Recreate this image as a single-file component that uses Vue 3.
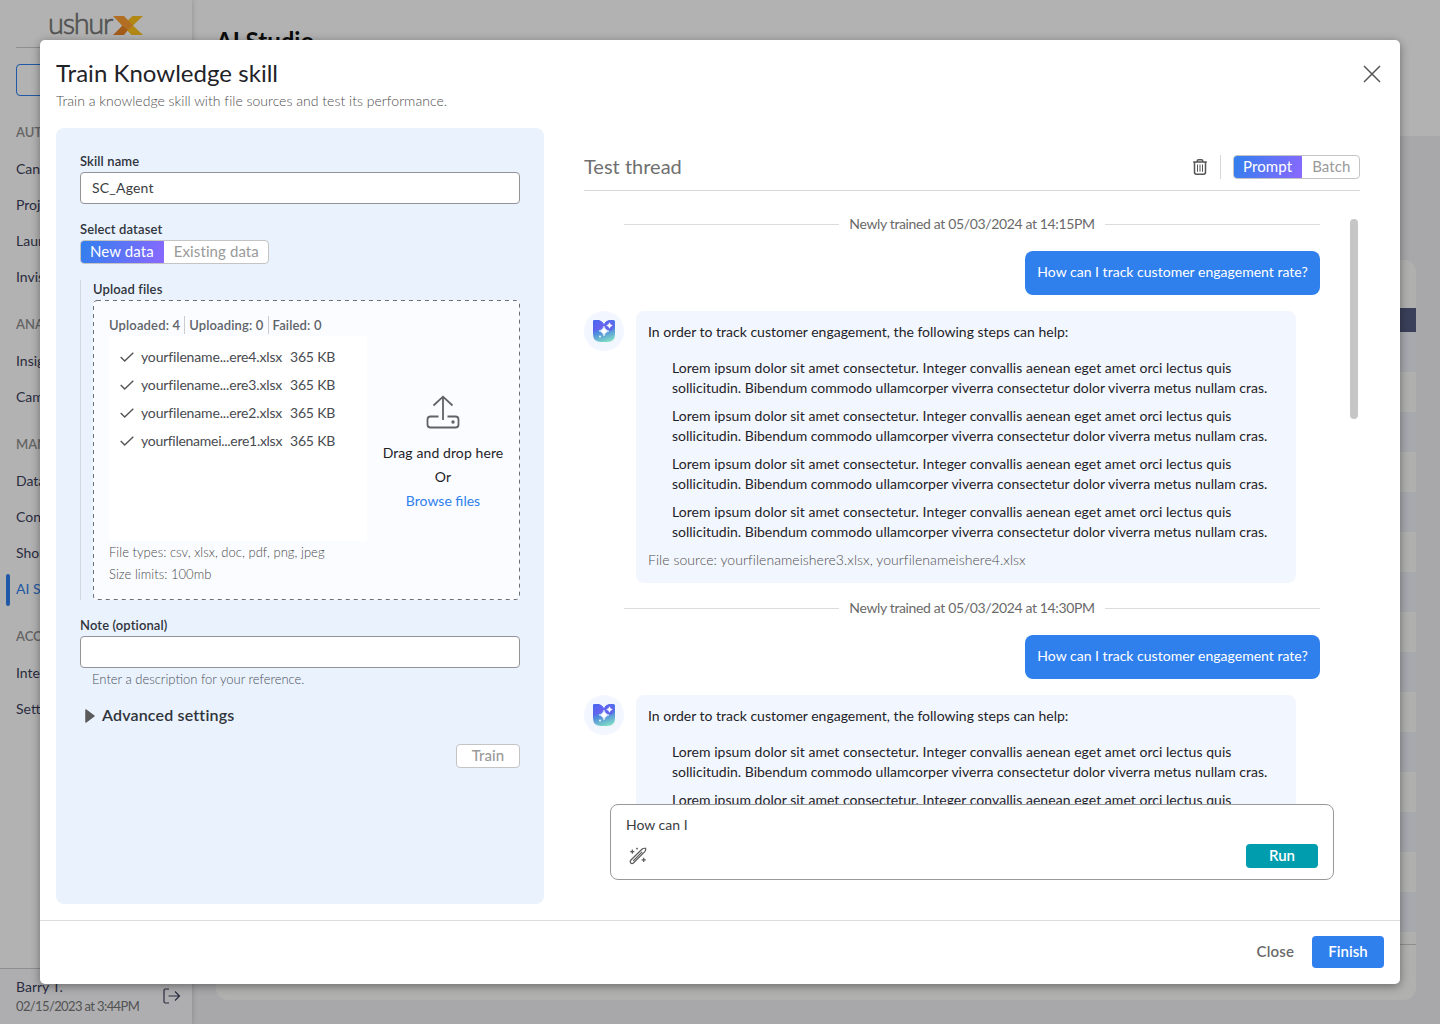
<script setup>
import { ref } from "vue";

const navGroups = [
  {
    title: "AUTOMATE",
    items: ["Canvas", "Projects", "Launchpad", "Invisible App"],
  },
  { title: "ANALYZE", items: ["Insights", "Campaigns"] },
  {
    title: "MANAGE",
    items: ["Data", "Contacts", "Shortlinks", "AI Studio"],
  },
  { title: "ACCOUNT", items: ["Integrations", "Settings"] },
];
const activeItem = "AI Studio";

const skillName = ref("SC_Agent");
const note = ref("");
const dataset = ref("New data");
const mode = ref("Prompt");

const files = [
  { name: "yourfilename...ere4.xlsx", size: "365 KB" },
  { name: "yourfilename...ere3.xlsx", size: "365 KB" },
  { name: "yourfilename...ere2.xlsx", size: "365 KB" },
  { name: "yourfilenamei...ere1.xlsx", size: "365 KB" },
];

const step = [
  "Lorem ipsum dolor sit amet consectetur. Integer convallis aenean eget amet orci lectus quis",
  "sollicitudin. Bibendum commodo ullamcorper viverra consectetur dolor viverra metus nullam cras.",
];
const threads = [
  {
    time: "Newly trained at 05/03/2024 at 14:15PM",
    steps: 4,
    source: "yourfilenameishere3.xlsx, yourfilenameishere4.xlsx",
  },
  { time: "Newly trained at 05/03/2024 at 14:30PM", steps: 2 },
];
</script>

<template>
  <div class="app">
    <aside class="sidebar">
      <div class="brand">
        <span class="brand-text">ushur</span>
        <svg class="brand-x" width="30" height="19" viewBox="0 0 30 19">
          <path class="x-right" d="M19.500 0H30L20 9.500L30 19H18.500L9.500 9.500Z" />
          <path class="x-left" d="M0 0H11L20 9.500L15 14L9 9.500Z" />
          <path class="x-foot" d="M0 19L9.500 9.500L15 14L11 19Z" />
        </svg>
      </div>
      <div class="new-btn"></div>
      <nav>
        <template v-for="g in navGroups" :key="g.title">
          <h4>{{ g.title }}</h4>
          <a
            v-for="item in g.items"
            :key="item"
            :class="{ active: item === activeItem }"
            >{{ item }}</a
          >
        </template>
      </nav>
      <div class="account">
        <div>
          <p class="account-name">Barry T.</p>
          <p class="account-time">02/15/2023 at 3:44PM</p>
        </div>
        <svg width="18" height="16" viewBox="0 0 18 16" class="logout">
          <path d="M6 1H2.500Q1 1 1 2.500V13.500Q1 15 2.500 15H6M5.500 8H16.500M12 3.500L16.500 8L12 12.500" />
        </svg>
      </div>
    </aside>
    <main class="page">
      <header class="page-head"><h1>AI Studio</h1></header>
      <div class="page-card">
        <div class="table-head"></div>
        <div v-for="n in 15" :key="n" class="table-row"></div>
        <div class="table-end"></div>
      </div>
    </main>

    <div class="overlay">
      <section class="modal">
        <header class="modal-head">
          <div>
            <h2>Train Knowledge skill</h2>
            <p>Train a knowledge skill with file sources and test its performance.</p>
          </div>
          <svg class="close-icon" width="18" height="18" viewBox="0 0 18 18">
            <path d="M1 1L17 17M17 1L1 17" />
          </svg>
        </header>

        <div class="modal-body">
          <form class="panel" @submit.prevent>
            <label>Skill name</label>
            <input v-model="skillName" class="field" type="text" />

            <label class="dataset-label">Select dataset</label>
            <div class="toggle">
              <button
                v-for="d in ['New data', 'Existing data']"
                :key="d"
                type="button"
                :class="{ on: dataset === d }"
                @click="dataset = d"
              >
                {{ d }}
              </button>
            </div>

            <div class="upload">
              <label>Upload files</label>
              <div class="dropzone">
                <svg class="dash" width="427" height="300">
                  <rect x="0.5" y="0.5" width="426" height="299" rx="3.500" />
                </svg>
                <div class="drop-left">
                  <div class="stats">
                    <span>Uploaded: 4</span>
                    <span>Uploading: 0</span>
                    <span>Failed: 0</span>
                  </div>
                  <ul class="files">
                    <li v-for="f in files" :key="f.name">
                      <svg width="14" height="10" viewBox="0 0 14 10">
                        <path d="M0.700 5L4.700 9L13.300 0.700" />
                      </svg>
                      <span class="file-name" :class="{ tight: f.name.length > 24 }">{{
                        f.name
                      }}</span>
                      <span class="file-size">{{ f.size }}</span>
                    </li>
                  </ul>
                  <p class="limits">File types: csv, xlsx, doc, pdf, png, jpeg</p>
                  <p class="limits">Size limits: 100mb</p>
                </div>
                <div class="drop-right">
                  <svg width="34" height="34" viewBox="0 0 34 34">
                    <path d="M12.500 21.500H4.500Q1.500 21.500 1.500 24.500V29.500Q1.500 32.500 4.500 32.500H29.500Q32.500 32.500 32.500 29.500V24.500Q32.500 21.500 29.500 21.500H21.500M17 25V2M7.500 10.500L17 1.700L26.500 10.500" />
                    <circle cx="27" cy="27" r="1.700" />
                  </svg>
                  <p>Drag and drop here</p>
                  <p>Or</p>
                  <p class="browse">Browse files</p>
                </div>
              </div>
            </div>

            <label class="note-label">Note (optional)</label>
            <input v-model="note" class="field" type="text" />
            <p class="hint">Enter a description for your reference.</p>

            <div class="advanced">
              <svg width="10" height="14" viewBox="0 0 10 14">
                <path d="M1 1L9 7L1 13Z" />
              </svg>
              <span>Advanced settings</span>
            </div>
            <button type="button" class="train">Train</button>
          </form>

          <div class="test">
            <div class="test-head">
              <h3>Test thread</h3>
              <svg class="trash" width="14" height="16" viewBox="0 0 14 16">
                <path d="M0.200 3H13.800M4.200 3V2.200Q4.200 0.800 5.600 0.800H8.400Q9.800 0.800 9.800 2.200V3M1.500 3V13.300Q1.500 15.200 3.400 15.200H10.600Q12.500 15.200 12.500 13.300V3" />
                <path class="thin" d="M4.500 5.500V12.700M7 5.500V12.700M9.500 5.500V12.700" />
              </svg>
              <span class="bar"></span>
              <div class="toggle">
                <button
                  v-for="m in ['Prompt', 'Batch']"
                  :key="m"
                  type="button"
                  :class="{ on: mode === m }"
                  @click="mode = m"
                >
                  {{ m }}
                </button>
              </div>
            </div>

            <div class="thread">
              <div class="messages">
                <template v-for="t in threads" :key="t.time">
                  <div class="divider">
                    <span>{{ t.time }}</span>
                  </div>
                  <div class="question">How can I track customer engagement rate?</div>
                  <div class="answer-row">
                    <div class="avatar">
                      <svg width="22" height="22" viewBox="0 0 22 22">
                        <defs>
                          <linearGradient id="bot" x1="0.3" y1="0" x2="0.6" y2="1">
                            <stop offset="0.1" stop-color="#4a6cf0" />
                            <stop offset="0.5" stop-color="#4f86e0" />
                            <stop offset="1" stop-color="#7fdcc4" />
                          </linearGradient>
                          <linearGradient id="lobe" x1="0" y1="0" x2="1" y2="1">
                            <stop offset="0" stop-color="#4468ee" />
                            <stop offset="1" stop-color="#7f5ff0" />
                          </linearGradient>
                        </defs>
                        <path class="bowl" d="M1.500 0H5Q9 0.500 11 4.500Q13 0.500 17 0H20.500Q22 0 22 1.500V14Q22 22 14 22H8Q0 22 0 14V1.500Q0 0 1.500 0Z" />
                        <path class="lobe" d="M1.500 0H5Q9 0.500 11 4.500Q10.500 9 6 9.500Q2 10 0 13V1.500Q0 0 1.500 0Z" />
                        <circle cx="16.300" cy="5.500" r="5.200" fill="#5f66ee" />
                        <path class="star" d="M11 6Q11.800 10.200 16 11Q11.800 11.800 11 16Q10.200 11.800 6 11Q10.200 10.200 11 6Z" />
                        <path class="star" d="M16.500 2.700Q17 5 19.300 5.500Q17 6 16.500 8.300Q16 6 13.700 5.500Q16 5 16.500 2.700Z" />
                        <circle cx="7" cy="16.500" r="0.900" fill="#fff" />
                      </svg>
                    </div>
                    <div class="answer">
                      <p>In order to track customer engagement, the following steps can help:</p>
                      <ul>
                        <li v-for="n in t.steps" :key="n">
                          <span class="wide">{{ step[0] }}</span
                          ><br />{{ step[1] }}
                        </li>
                      </ul>
                      <p v-if="t.source" class="source">File source: {{ t.source }}</p>
                    </div>
                  </div>
                </template>
              </div>
              <div class="scrollbar"></div>
            </div>

            <div class="prompt">
              <p>How can I</p>
              <div class="prompt-actions">
                <svg width="18" height="18" viewBox="0 0 18 18" class="wand">
                  <path d="M1.700 13.300L13.200 2Q14.400 1 16.700 1.300Q16.800 3.500 15.800 4.600L4.400 16Q3 17.200 1.700 16Q0.600 14.600 1.700 13.300ZM4.200 13.800L13.200 4.800" />
                  <path d="M3.300 2.500V6.700M1.200 4.600H5.400M14.700 10.700V14.900M12.600 12.800H16.800M8 0.800V2.400M7.200 1.600H8.800" />
                </svg>
                <button type="button" class="run">Run</button>
              </div>
            </div>
          </div>
        </div>

        <footer class="modal-foot">
          <button type="button" class="close">Close</button>
          <button type="button" class="finish">Finish</button>
        </footer>
      </section>
    </div>
  </div>
</template>

<style>
body {
  margin: 0;
  overflow: hidden;
}
</style>

<style scoped>
* {
  margin: 0;
  padding: 0;
  box-sizing: border-box;
}
.app {
  position: relative;
  display: flex;
  width: 1440px;
  height: 1024px;
  overflow: hidden;
  font-family: Lato, sans-serif;
  font-size: 14px;
  line-height: 20px;
  color: #1f2328;
  background: #f1f1f4;
}
button {
  font-family: inherit;
  border: none;
  background: none;
  cursor: pointer;
}
svg path {
  fill: none;
}
ul {
  list-style: none;
}

/* page behind the dialog */
.sidebar {
  display: flex;
  flex-direction: column;
  width: 192px;
  background: #fff;
  box-shadow: 0 0 6px rgba(0, 0, 0, 0.2);
  z-index: 1;
}
.brand {
  display: flex;
  align-items: flex-start;
  height: 48px;
  margin: 0 16px;
  padding: 0 0 0 32px;
  border-bottom: 1px solid #ccc;
}
.brand-text {
  width: 65px;
  font-size: 29px;
  line-height: 46px;
  font-weight: 300;
  letter-spacing: -1.3px;
  color: #777;
  -webkit-text-stroke: 0.7px #777;
}
.brand-x {
  margin-top: 16px;
}
.x-right {
  fill: #ffc31f;
}
.x-left {
  fill: #ffa033;
}
.x-foot {
  fill: #ea8526;
}
.new-btn {
  height: 32px;
  margin: 16px 16px 7px;
  border: 1px solid #2f80ed;
  border-radius: 4px;
}
nav {
  flex: 1;
}
nav h4 {
  height: 48px;
  padding: 10px 16px 0;
  font-size: 13px;
  line-height: 38px;
  font-weight: 600;
  color: #919191;
}
nav a {
  display: block;
  position: relative;
  height: 36px;
  padding-left: 16px;
  line-height: 36px;
  color: #3c3f5c;
}
nav a.active {
  color: #2f80ed;
}
nav a.active::before {
  content: "";
  position: absolute;
  left: 6px;
  top: 3px;
  width: 4px;
  height: 32px;
  border-radius: 2px;
  background: #2f80ed;
}
.account {
  display: flex;
  justify-content: space-between;
  height: 56px;
  padding: 8px 11px 0 16px;
  border-top: 1px solid #ccc;
  background: #f9fafd;
}
.account-name {
  line-height: 20px;
  color: #3c3f5c;
}
.account-time {
  font-size: 13px;
  line-height: 18px;
  letter-spacing: -0.62px;
  color: #777;
}
.logout {
  margin-top: 11px;
}
.logout path {
  stroke: #3c3f5c;
  stroke-width: 1.2;
}
.page {
  flex: 1;
}
.page-head {
  height: 136px;
  padding: 24px;
  background: #fff;
}
.page-head h1 {
  font-size: 24px;
  line-height: 34px;
  font-weight: 700;
  color: #111;
}
.page-card {
  height: 740px;
  margin: 124px 24px 0;
  padding-top: 48px;
  border-radius: 12px;
  background: #fcfcfb;
}
.table-head {
  height: 24px;
  background: #545c80;
}
.table-row {
  height: 40px;
}
.table-row:nth-child(even) {
  background: #f1f3f9;
}
.table-end {
  height: 13px;
  border-bottom: 1px solid #ccc;
}

.overlay {
  position: absolute;
  inset: 0;
  display: flex;
  padding: 40px;
  background: rgba(0, 0, 0, 0.3);
  z-index: 2;
}
.modal {
  display: flex;
  flex-direction: column;
  width: 1360px;
  height: 944px;
  border-radius: 5px;
  background: #fff;
  box-shadow: 0 2px 10px rgba(0, 0, 0, 0.4);
}
.modal-head {
  display: flex;
  justify-content: space-between;
  height: 88px;
  padding: 17px 19px 0 16px;
}
.modal-head h2 {
  font-size: 24px;
  line-height: 32px;
  font-weight: 400;
  letter-spacing: 0.03px;
}
.modal-head p {
  margin-top: 1px;
  font-weight: 300;
  line-height: 22px;
  letter-spacing: 0.02px;
  color: #4e4e4e;
}
.close-icon {
  margin-top: 8px;
}
.close-icon path {
  stroke: #555;
  stroke-width: 1.5;
}
.modal-body {
  display: flex;
  gap: 40px;
  flex: 1;
  padding: 0 40px 16px 16px;
}

/* left form */
.panel {
  width: 488px;
  padding: 24px;
  border-radius: 8px;
  background: #eaf2fe;
}
label {
  display: block;
  height: 20px;
  font-size: 13px;
  line-height: 18px;
  font-weight: 600;
  letter-spacing: 0.12px;
  color: #30343b;
}
.field {
  display: block;
  width: 440px;
  height: 32px;
  padding: 0 11px 2px;
  border: 1px solid #919397;
  border-radius: 4px;
  background: #fff;
  font-family: inherit;
  font-size: 14px;
  letter-spacing: 0.2px;
  color: #3a3d42;
  outline: none;
}
.dataset-label {
  margin-top: 16px;
}
.toggle {
  display: inline-flex;
  height: 24px;
  border: 1px solid #c4c4c4;
  border-radius: 4px;
  background: #fff;
  overflow: hidden;
}
.toggle button {
  padding: 0 9px 2px 10px;
  font-size: 15px;
  line-height: 19px;
  letter-spacing: 0.1px;
  color: #9a9a9a;
}
.toggle button.on {
  margin: -1px 0 -1px -1px;
  padding: 0 10px 2px;
  border-radius: 0 2px 2px 0;
  color: #fff;
  background: linear-gradient(110deg, #2f80ed, #8b68ff);
}
.upload {
  margin-top: 16px;
  padding-left: 12px;
  border-left: 1px solid #d3d7de;
}
.dropzone {
  position: relative;
  display: flex;
  height: 300px;
  padding: 16px 16px 0;
  border-radius: 4px;
  background: #fafcff;
}
.dash {
  position: absolute;
  left: 0;
  top: 0;
}
.dash rect {
  fill: none;
  stroke: #6a6f78;
  stroke-dasharray: 4 4;
}
.drop-left {
  width: 258px;
}
.stats {
  display: flex;
  height: 20px;
  line-height: 18px;
}
.stats span {
  height: 18px;
  padding-right: 4px;
  margin-right: 4px;
  border-right: 1px solid #ccc;
  font-size: 13px;
  font-weight: 600;
  letter-spacing: 0.15px;
  white-space: nowrap;
  color: #5f6368;
}
.stats span:last-child {
  border: none;
}
.files {
  height: 205px;
  padding: 7px 11px;
  background: #fff;
}
.files li {
  display: flex;
  align-items: center;
  height: 28px;
  color: #484b50;
}
.files svg path {
  stroke: #555;
  stroke-width: 1.4;
}
.file-name {
  width: 142px;
  margin: 0 7px 0 7px;
  letter-spacing: -0.15px;
}
.file-name.tight {
  letter-spacing: -0.28px;
}
.file-size {
  letter-spacing: -0.2px;
}
.limits {
  font-size: 13px;
  font-weight: 300;
  line-height: 22px;
  letter-spacing: 0.04px;
  color: #4a4a4a;
}
.drop-right {
  display: flex;
  flex-direction: column;
  align-items: center;
  width: 137px;
  padding: 79px 0 0 15px;
}
.drop-right svg {
  margin-bottom: 12px;
}
.drop-right svg path {
  stroke: #5f6368;
  stroke-width: 1.8;
}
.drop-right svg circle {
  fill: #5f6368;
}
.drop-right p {
  line-height: 24px;
  letter-spacing: 0.1px;
  white-space: nowrap;
}
.drop-right .browse {
  letter-spacing: 0;
  color: #2f80ed;
}
.note-label {
  margin-top: 16px;
}
.hint {
  padding-left: 12px;
  font-size: 13px;
  line-height: 22px;
  font-weight: 300;
  color: #4a515b;
}
.advanced {
  display: flex;
  align-items: center;
  gap: 7px;
  height: 24px;
  margin-top: 14px;
  padding-left: 5px;
  font-size: 16px;
  font-weight: 600;
  letter-spacing: 0.17px;
  color: #30343b;
}
.advanced span {
  padding-bottom: 2px;
}
.advanced svg path {
  fill: #5a5a5a;
  stroke: #5a5a5a;
  stroke-width: 1.5;
  stroke-linejoin: round;
}
.train {
  display: block;
  width: 64px;
  height: 24px;
  margin: 16px 0 0 auto;
  padding-bottom: 2px;
  border: 1px solid #c4c4c4;
  border-radius: 4px;
  background: #fff;
  font-size: 15px;
  line-height: 19px;
  letter-spacing: 0.1px;
  font-weight: 500;
  color: #9a9a9a;
}

/* right side */
.test {
  display: flex;
  flex-direction: column;
  width: 776px;
}
.test-head {
  display: flex;
  align-items: center;
  height: 63px;
  padding-top: 16px;
  border-bottom: 1px solid #d6d6d6;
}
.test-head h3 {
  flex: 1;
  padding-bottom: 2px;
  font-size: 20px;
  font-weight: 400;
  line-height: 28px;
  color: #707070;
}
.test-head .toggle {
  width: 127px;
}
.test-head .toggle button {
  flex: 1 1 auto;
}
.trash path {
  stroke: #555;
  stroke-width: 1.5;
}
.trash path.thin {
  stroke-width: 1;
}
.bar {
  width: 1px;
  height: 24px;
  margin: 0 12px 0 13px;
  background: #d6d6d6;
}
.thread {
  display: flex;
  justify-content: space-between;
  height: 613px;
  padding: 24px 2px 0 0;
  overflow: hidden;
}
.messages {
  width: 736px;
}
.divider {
  display: flex;
  align-items: center;
  gap: 10px;
  height: 19px;
  margin-left: 40px;
  letter-spacing: -0.36px;
  color: #6a6a6a;
}
.divider span {
  padding-bottom: 2px;
}
.divider::before,
.divider::after {
  content: "";
  flex: 1;
  height: 1px;
  background: #dcdcdc;
}
.question {
  width: 295px;
  height: 44px;
  margin: 17px 0 16px auto;
  border-radius: 8px;
  background: #2f80ed;
  line-height: 42px;
  letter-spacing: 0.02px;
  text-align: center;
  color: #fff;
}
.answer-row {
  display: flex;
  gap: 12px;
  margin-bottom: 16px;
}
.avatar {
  display: flex;
  align-items: center;
  justify-content: center;
  width: 40px;
  height: 40px;
  border-radius: 50%;
  background: #f2f6fe;
}
.avatar .bowl {
  fill: url(#bot);
}
.avatar .lobe {
  fill: url(#lobe);
}
.avatar .star {
  fill: #fff;
  stroke: #fff;
  stroke-width: 0.5;
}
.answer {
  width: 660px;
  height: 272px;
  padding: 11px 12px;
  border-radius: 8px;
  background: #f2f6fe;
}
.answer ul {
  padding: 16px 0 0 24px;
}
.answer li {
  margin-bottom: 8px;
  white-space: nowrap;
}
.answer .wide {
  letter-spacing: 0.04px;
}
.answer .source {
  font-weight: 300;
  letter-spacing: 0.05px;
  color: #4f4f4f;
}
.scrollbar {
  width: 8px;
  height: 200px;
  margin-top: 4px;
  border-radius: 4px;
  background: #c6c6c6;
}
.prompt {
  position: relative;
  height: 76px;
  margin: 0 26px;
  padding: 10px 15px 11px;
  border: 1px solid #999;
  border-radius: 8px;
  background: #fff;
  color: #3a3d42;
}
.prompt-actions {
  display: flex;
  align-items: center;
  justify-content: space-between;
  margin-top: 9px;
  padding-left: 3px;
}
.wand path {
  stroke: #5a5a5a;
  stroke-width: 1.2;
}
.run {
  width: 72px;
  height: 24px;
  padding-bottom: 2px;
  border-radius: 4px;
  background: #009dae;
  font-size: 15px;
  line-height: 20px;
  font-weight: 600;
  color: #fff;
}
.modal-foot {
  display: flex;
  align-items: center;
  justify-content: flex-end;
  gap: 18px;
  height: 64px;
  padding: 0 16px 1px 0;
  border-top: 1px solid #dcdcdc;
}
.modal-foot button {
  height: 32px;
  padding-bottom: 3px;
  font-size: 15px;
  font-weight: 600;
}
.modal-foot .close {
  letter-spacing: 0.15px;
  color: #6a6a6a;
}
.finish {
  width: 72px;
  border-radius: 4px;
  background: #2f80ed;
  color: #fff;
}
</style>
